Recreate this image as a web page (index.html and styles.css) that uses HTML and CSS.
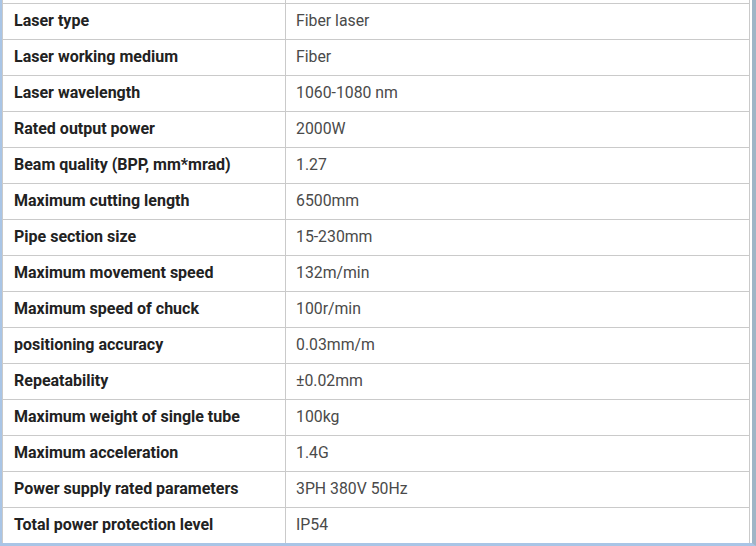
FILE: index.html
```html
<!DOCTYPE html>
<html>
<head>
<meta charset="utf-8">
<link rel="stylesheet" href="styles.css">
</head>
<body>
<div class="frame">
  <div class="inner">
    <table class="spec">
      <colgroup><col class="c-label"><col class="c-value"></colgroup>
      <tr class="clip"><td></td><td></td></tr>
      <tr><th>Laser type</th><td>Fiber laser</td></tr>
      <tr><th>Laser working medium</th><td>Fiber</td></tr>
      <tr><th>Laser wavelength</th><td>1060-1080 nm</td></tr>
      <tr><th>Rated output power</th><td>2000W</td></tr>
      <tr><th>Beam quality (BPP, mm*mrad)</th><td>1.27</td></tr>
      <tr><th>Maximum cutting length</th><td>6500mm</td></tr>
      <tr><th>Pipe section size</th><td>15-230mm</td></tr>
      <tr><th>Maximum movement speed</th><td>132m/min</td></tr>
      <tr><th>Maximum speed of chuck</th><td>100r/min</td></tr>
      <tr><th>positioning accuracy</th><td>0.03mm/m</td></tr>
      <tr><th>Repeatability</th><td>±0.02mm</td></tr>
      <tr><th>Maximum weight of single tube</th><td>100kg</td></tr>
      <tr><th>Maximum acceleration</th><td>1.4G</td></tr>
      <tr><th>Power supply rated parameters</th><td>3PH 380V 50Hz</td></tr>
      <tr><th>Total power protection level</th><td>IP54</td></tr>
    </table>
  </div>
</div>
</body>
</html>
```
FILE: styles.css
```css
html, body {
  margin: 0;
  padding: 0;
  background: #ffffff;
}
.frame {
  width: 756px;
  height: 546px;
  box-sizing: border-box;
  border-left: 2px solid #a9c5e6;
  border-right: 4px solid #9fb5c6;
  border-bottom: 3px solid #a9c5e6;
  overflow: hidden;
}
.inner {
  padding-right: 2px;
}
.spec {
  width: 748px;
  border-collapse: collapse;
  table-layout: fixed;
  font-family: Roboto, "Liberation Sans", sans-serif;
  font-size: 16px;
}
.c-label {
  width: 283px;
}
.spec th, .spec td {
  border: 1px solid #cacaca;
  height: 36px;
  padding: 0 0 1px 10px;
  text-align: left;
  vertical-align: middle;
  box-sizing: border-box;
}
.spec th {
  font-weight: 700;
  color: #222222;
  padding-left: 11px;
}
.spec td {
  font-weight: 400;
  color: #4a4a4a;
  font-size: 15.8px;
}
.spec tr.clip td {
  height: 3px;
  padding: 0;
  border-top: none;
  font-size: 0;
  line-height: 0;
}
```
